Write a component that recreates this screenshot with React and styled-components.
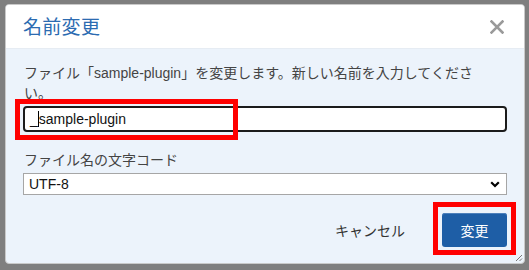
import React from "react";
import styled, { createGlobalStyle } from "styled-components";

const Global = createGlobalStyle`
  html, body { margin: 0; padding: 0; }
  body {
    background: #7f7f7f;
    font-family: "Liberation Sans", "Noto Sans CJK JP", sans-serif;
    width: 529px;
    height: 270px;
    overflow: hidden;
  }
`;

const Page = styled.div`
  padding: 4px 0 0 5px;
`;

const Dialog = styled.div`
  position: relative;
  width: 520px;
  height: 260px;
  box-sizing: border-box;
  border: 1px solid #c9c9c9;
  border-radius: 4px;
  background: #ecf3fb;
  overflow: hidden;
  display: flex;
  flex-direction: column;
`;

const Header = styled.div`
  height: 43px;
  background: #ffffff;
  display: flex;
  align-items: center;
  justify-content: space-between;
  padding: 0 19px 0 17px;
  border-bottom: 1px solid #e6ecf3;
`;

const Title = styled.h1`
  margin: 0;
  font-family: "Noto Sans CJK JP", sans-serif;
  font-weight: 400;
  font-size: 19px;
  color: #2c6bb1;
  letter-spacing: 0.3px;
  padding-bottom: 2px;
`;

const Close = styled.button`
  border: none;
  background: none;
  padding: 0;
  width: 16px;
  height: 16px;
  display: flex;
  align-items: center;
  justify-content: center;
  cursor: pointer;
`;

const Body = styled.div`
  flex: 1;
  padding: 14px 17px 0 17px;
  display: flex;
  flex-direction: column;
`;

const Message = styled.p`
  margin: 0 0 3px 1px;
  font-size: 14px;
  line-height: 20px;
  color: #444;
  width: 474px;
`;

const InputWrap = styled.div`
  position: relative;
`;

const FakeInput = styled.div`
  height: 26px;
  box-sizing: border-box;
  border: 2px solid #1b1b1b;
  border-radius: 4px;
  background: #fff;
  padding: 0 5px;
  display: flex;
  align-items: center;
  font-size: 14px;
  color: #111;
`;

const Caret = styled.span`
  display: inline-block;
  width: 1px;
  height: 16px;
  background: #000;
  margin: 0 0 0 0;
`;

const Highlight = styled.span`
  position: absolute;
  pointer-events: none;
  border: 5px solid #ff0000;
  box-sizing: border-box;
  left: ${(p) => p.$l}px;
  top: ${(p) => p.$t}px;
  width: ${(p) => p.$w}px;
  height: ${(p) => p.$h}px;
`;

const Label = styled.label`
  margin: 18px 0 3px 1px;
  font-size: 14px;
  line-height: 20px;
  color: #444;
`;

const SelectWrap = styled.div`
  position: relative;
  height: 22px;
`;

const Select = styled.select`
  appearance: none;
  -webkit-appearance: none;
  width: 100%;
  height: 22px;
  box-sizing: border-box;
  border: 1px solid #a6a6a6;
  border-radius: 0;
  background: #fff;
  padding: 0 0 0 5px;
  font-family: "Liberation Sans", sans-serif;
  font-size: 14px;
  color: #111;
  outline: none;
`;

const Chevron = styled.svg`
  position: absolute;
  right: 7px;
  top: 8px;
  pointer-events: none;
`;

const Footer = styled.div`
  display: flex;
  justify-content: flex-end;
  align-items: center;
  margin-top: 18px;
  gap: 17px;
`;

const CancelButton = styled.button`
  border: none;
  background: none;
  font-family: "Noto Sans CJK JP", sans-serif;
  font-size: 14px;
  color: #333;
  padding: 0 20px;
  height: 34px;
  cursor: pointer;
`;

const PrimaryWrap = styled.div`
  position: relative;
`;

const PrimaryButton = styled.button`
  width: 65px;
  height: 34px;
  border: none;
  border-radius: 3px;
  background: #1e5ea6;
  box-shadow: inset 0 1px 0 #4d80bb;
  color: #fff;
  font-family: "Noto Sans CJK JP", sans-serif;
  font-size: 14px;
  cursor: pointer;
`;

const Grip = styled.svg`
  position: absolute;
  right: 1px;
  bottom: 1px;
`;

export default function App() {
  return (
    <>
      <Global />
      <Page>
        <Dialog>
          <Header>
            <Title>名前変更</Title>
            <Close aria-label="close">
              <svg width="14" height="14" viewBox="0 0 14 14">
                <path d="M1.5 1.5 L12.5 12.5 M12.5 1.5 L1.5 12.5" stroke="#9a9a9a" strokeWidth="2.6" strokeLinecap="square" />
              </svg>
            </Close>
          </Header>
          <Body>
            <Message>ファイル「sample-plugin」を変更します。新しい名前を入力してください。</Message>
            <InputWrap>
              <FakeInput>
                _<Caret />sample-plugin
              </FakeInput>
              <Highlight $l={-8} $t={-7} $w={223} $h={41} />
            </InputWrap>
            <Label>ファイル名の文字コード</Label>
            <SelectWrap>
              <Select defaultValue="UTF-8">
                <option>UTF-8</option>
                <option>Shift_JIS</option>
              </Select>
              <Chevron width="10" height="7" viewBox="0 0 10 7">
                <path d="M1.2 1.2 L5 5 L8.8 1.2" fill="none" stroke="#000" strokeWidth="2.2" />
              </Chevron>
            </SelectWrap>
            <Footer>
              <CancelButton>キャンセル</CancelButton>
              <PrimaryWrap>
                <PrimaryButton>変更</PrimaryButton>
                <Highlight $l={-9} $t={-11} $w={83} $h={53} />
              </PrimaryWrap>
            </Footer>
          </Body>
          <Grip width="9" height="9" viewBox="0 0 9 9">
            <path d="M8 2 L2 8 M8 5.5 L5.5 8" stroke="#777" strokeWidth="1" />
          </Grip>
        </Dialog>
      </Page>
    </>
  );
}
